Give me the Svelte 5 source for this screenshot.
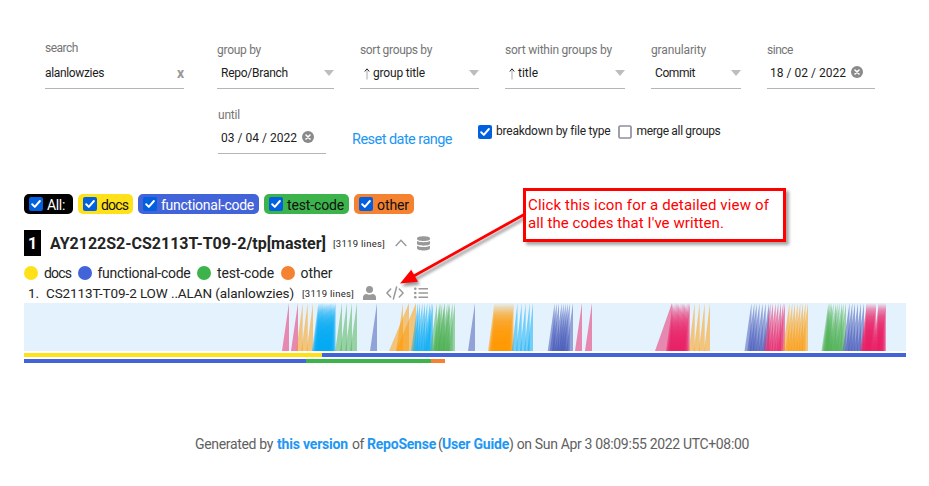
<script>
  function fit(node, width) {
    const natural = node.getBoundingClientRect().width;
    node.style.letterSpacing = `${(width - natural) / node.textContent.length}px`;
  }

  const selects = [
    { label: 'group by', lw: 44, value: 'Repo/Branch', vw: 67, cls: 'group' },
    { label: 'sort groups by', lw: 72, value: 'group title', vw: 52, cls: 'sort', arrow: true },
    { label: 'sort within groups by', lw: 107, value: 'title', vw: 20, cls: 'within', arrow: true },
    { label: 'granularity', lw: 55, value: 'Commit', vw: 40, cls: 'gran' }
  ];

  const tags = [
    { name: 'All:', w: 18, cls: 'all' },
    { name: 'docs', w: 27, cls: 'docs' },
    { name: 'functional-code', w: 93, cls: 'func' },
    { name: 'test-code', w: 57, cls: 'test' },
    { name: 'other', w: 32, cls: 'other' }
  ];

  const pink = '#e91e63';
  const orange = '#ff9800';
  const blue = '#03a9f4';
  const green = '#4caf50';
  const indigo = '#3f51b5';

  const range = (from, to, step) => {
    const out = [];
    for (let v = from; v <= to + 0.01; v += step) out.push(v);
    return out;
  };
  const group = (color, peaks, w = 7) => peaks.map((x) => ({ color, x, w }));

  const ramps = [
    ...group(pink, [265, 274]),
    ...group(orange, [278.7, 283.7, 289], 6.5),
    ...group(blue, range(294.5, 312, 0.9), 6.5),
    ...group(green, [318, 323, 328, 333], 6.8),
    ...group(indigo, [353]),
    ...group(orange, [379]),
    ...group(orange, [385, 392], 20),
    ...group(blue, [394, 396, 398.5, 401, 403.3, 406, 407.5, 409]),
    ...group(green, range(413, 431, 2.6)),
    ...group(green, [416.5, 420.5, 425, 431]),
    ...group(indigo, [451]),
    ...group(orange, range(470.5, 490, 1), 6.5),
    ...group(blue, [493.5, 497.7, 501.7, 505.7, 509], 5.7),
    ...group(indigo, [530.7, 532.7, 535, 537.7, 539.7, 541.7, 543.7, 545.7, 549]),
    ...group(pink, [558, 568]),
    ...group(pink, [648], 17),
    ...group(pink, range(649, 666, 1.2)),
    ...group(orange, [670.7, 675.7, 680.7, 686], 6),
    ...group(indigo, [727.5, 730.3, 732.7, 735.5, 738.7, 741.7, 745]),
    ...group(pink, [746.5, 749, 751.7, 754.3, 757, 759.3, 761]),
    ...group(orange, [765.5, 768.3, 771, 773.7, 776.3, 779, 781.5, 784]),
    ...group(green, [804.5, 805.5, 806.7, 808, 809.5, 812, 813.5, 815.5, 818, 819.5, 822]),
    ...group(indigo, [825.5, 828.3, 831, 834, 837, 840]),
    ...group(pink, [...range(843, 852.5, 1), ...range(855, 862, 1)])
  ];

  const credits = [
    { text: 'Generated by', w: 78, gap: 4 },
    { text: 'this version', w: 71, gap: 4, href: '#version' },
    { text: 'of', w: 12, gap: 3 },
    { text: 'RepoSense', w: 69, gap: 2, href: '#reposense' },
    { text: '(', w: 4, gap: 0 },
    { text: 'User Guide', w: 67, gap: 0, href: '#guide' },
    { text: ') on Sun Apr 3 08:09:55 2022 UTC+08:00', w: 240, gap: 0 }
  ];
</script>

{#snippet box(on)}
  <svg class="check" viewBox="0 0 14 14">
    {#if on}
      <rect width="14" height="14" rx="2" fill="#0060df" />
      <path d="M3.2 7.3 5.8 9.9 10.9 4" fill="none" stroke="#fff" stroke-width="2" stroke-linecap="round" stroke-linejoin="round" />
    {:else}
      <rect x="1" y="1" width="12" height="12" rx="1.3" fill="#fff" stroke="#8f8f9d" stroke-width="1.7" />
    {/if}
  </svg>
{/snippet}

{#snippet clear()}
  <svg class="clear" viewBox="0 0 12 12">
    <circle cx="6" cy="6" r="6" fill="#8a8a8a" />
    <path d="M4 4 8 8M8 4 4 8" stroke="#fff" stroke-width="1.6" stroke-linecap="round" />
  </svg>
{/snippet}

<main>
  <section class="filters">
    <div class="field search">
      <div class="label"><span use:fit={33}>search</span></div>
      <div class="value"><span use:fit={59}>alanlowzies</span><b class="x">x</b></div>
    </div>
    {#each selects as s}
      <div class="field {s.cls}">
        <div class="label"><span use:fit={s.lw}>{s.label}</span></div>
        <div class="value">
          {#if s.arrow}
            <svg class="up" viewBox="0 0 6 12"><path d="M3 2.5V11.5" stroke="#aaa" stroke-width="1" /><path d="M.8 3.5 3 .8 5.2 3.5" fill="none" stroke="#222" stroke-width="1" /></svg>
          {/if}
          <span use:fit={s.vw}>{s.value}</span>
          <i class="caret"></i>
        </div>
      </div>
    {/each}
    <div class="field since">
      <div class="label"><span use:fit={26}>since</span></div>
      <div class="value"><span use:fit={76}>18 / 02 / 2022</span>{@render clear()}</div>
    </div>
  </section>

  <section class="second">
    <div class="field until">
      <div class="label"><span use:fit={22}>until</span></div>
      <div class="value"><span use:fit={76}>03 / 04 / 2022</span>{@render clear()}</div>
    </div>
    <a class="reset" href="#reset"><span use:fit={100}>Reset date range</span></a>
    <div class="option first">{@render box(true)}<span use:fit={114}>breakdown by file type</span></div>
    <div class="option">{@render box(false)}<span use:fit={84}>merge all groups</span></div>
  </section>

  <section class="tags">
    {#each tags as t}
      <div class="tag {t.cls}">{@render box(true)}<span use:fit={t.w}>{t.name}</span></div>
    {/each}
  </section>

  <section class="title">
    <b class="rank">1</b>
    <h1><span use:fit={276}>AY2122S2-CS2113T-T09-2/tp[master]</span></h1>
    <small><span use:fit={52}>[3119 lines]</span></small>
    <svg class="chevron" viewBox="0 0 12 8"><path d="M.7 7 6 1.2 11.3 7" fill="none" stroke="#999" stroke-width="1.4" /></svg>
    <svg class="db" viewBox="0 0 13 15" fill="#999">
      <path d="M0 2.3C0 -.5 13 -.5 13 2.3V3.1C13 5.7 0 5.7 0 3.1Z" />
      <path d="M0 5.1C2.7 6.7 10.3 6.7 13 5.1V7.8C13 10.3 0 10.3 0 7.8Z" />
      <path d="M0 9.8C2.7 11.4 10.3 11.4 13 9.8V12.3C13 15.3 0 15.3 0 12.3Z" />
    </svg>
  </section>

  <section class="legend">
    {#each tags.slice(1) as t}
      <i class="dot {t.cls}"></i><span use:fit={t.w}>{t.name}</span>
    {/each}
  </section>

  <section class="author">
    <span class="num">1.</span>
    <span class="name" use:fit={248}>CS2113T-T09-2 LOW ..ALAN (alanlowzies)</span>
    <small><span use:fit={52}>[3119 lines]</span></small>
    <svg class="user" viewBox="0 0 13 14" fill="#999"><circle cx="6.5" cy="3.5" r="3.5" /><path d="M0 14V11.5C0 9.2 1.5 8 3.5 8Q6.5 9.4 9.5 8C11.5 8 13 9.2 13 11.5V14Z" /></svg>
    <svg class="code" viewBox="0 0 18 14" fill="none" stroke="#999" stroke-width="1.5" stroke-linecap="round" stroke-linejoin="round"><path d="M4.7 3 .9 7 4.7 11M13.3 3 17.1 7 13.3 11M10.6 1 7.4 13" /></svg>
    <svg class="list" viewBox="0 0 14 12"><path d="M4.5 1.7H14M4.5 6H14M4.5 10.3H14" stroke="#999" stroke-width="1.5" /><g fill="#999"><circle cx="1.3" cy="1.7" r="1.3" /><circle cx="1.3" cy="6" r="1.3" /><circle cx="1.3" cy="10.3" r="1.3" /></g></svg>
  </section>

  <section class="chart">
    <svg class="ramps" viewBox="0 0 882 48">
      {#each ramps as r}
        <polygon points="{r.x - r.w},48 {r.x},0 {r.x},48" fill={r.color} fill-opacity="0.5" />
      {/each}
    </svg>
    <div class="bar"><i class="docs"></i><i class="func grow"></i></div>
    <div class="bar two"><i class="func"></i><i class="test"></i><i class="other"></i></div>
  </section>

  <footer>
    {#each credits as c}
      {#if c.href}
        <a href={c.href} style:margin-right="{c.gap}px"><span use:fit={c.w}>{c.text}</span></a>
      {:else}
        <span use:fit={c.w} style:margin-right="{c.gap}px">{c.text}</span>
      {/if}
    {/each}
  </footer>

  <svg class="pointer" viewBox="0 0 140 110">
    <path d="M135 24 22 87" stroke="#f00" stroke-width="2.7" />
    <path d="M10 93.4 21.2 79.8 28 91.8Z" fill="#f00" />
  </svg>
  <aside>
    <span use:fit={241}>Click this icon for a detailed view of</span>
    <span use:fit={196}>all the codes that I've written.</span>
  </aside>
</main>

<style>
  :global(body) { background: #fff; overflow: hidden; }
  main {
    position: relative;
    width: 929px;
    height: 486px;
    background: #fff;
    color: #242424;
    font: 12px/16px Roboto, "Open Sans", sans-serif;
  }
  span { white-space: pre; flex: none; }
  svg { display: block; flex: none; overflow: visible; }
  a { color: #2196f3; text-decoration: none; }

  .filters { display: flex; padding-left: 45px; height: 89px; }
  .field { box-sizing: border-box; height: 47px; border-bottom: 1px solid #b5b5b5; }
  .filters .field { margin-top: 42px; }
  .label { display: flex; height: 16px; color: #757575; }
  .value { display: flex; align-items: center; height: 16px; margin-top: 7px; padding-left: 3px; color: #1c1c1c; }
  .filters .search { width: 139px; margin-right: 33px; margin-top: 40px; height: 49px; }
  .search .value { padding-left: 0; margin-top: 9px; }
  .x { margin-left: auto; color: #999; font-size: 14px; font-weight: 700; }
  .group { width: 117px; margin-right: 26px; }
  .sort { width: 119px; margin-right: 26px; }
  .within { width: 120px; margin-right: 26px; }
  .gran { width: 90px; margin-right: 26px; }
  .gran .value, .group .value { padding-left: 4px; }
  .since, .until { width: 108px; }
  .up { width: 6px; height: 12px; margin: 2px 3px 0 1px; }
  .caret { width: 0; height: 0; margin-left: auto; border: 5px solid transparent; border-top: 6px solid #bdbdbd; border-bottom: 0; }
  .clear { width: 12px; height: 12px; margin: -2px 0 0 5px; }

  .second { display: flex; padding: 18px 0 0 218px; height: 87px; box-sizing: border-box; }
  .reset { display: flex; margin: 24px 0 0 26px; font-size: 14.5px; line-height: 18px; height: 18px; }
  .option { display: flex; align-items: center; height: 16px; gap: 4px; margin-top: 17px; margin-left: 8px; }
  .option.first { margin-left: 26px; }
  .option span { margin-top: -2px; }
  .check { width: 14px; height: 14px; }

  .tags { display: flex; gap: 5px; margin-top: 18px; padding-left: 24px; font-size: 14px; }
  .tag { display: flex; align-items: center; gap: 4px; box-sizing: border-box; height: 20px; padding: 0 5px; border-radius: 5px; }
  .tag span { padding-top: 2px; }
  .tag.docs, .tag.test, .tag.other { color: #111; }
  .tag.all { width: 49px; }
  .tag.docs { width: 55px; }
  .tag.func { width: 121px; }
  .tag.test { width: 85px; }
  .tag.other { width: 60px; }
  .all { background: #000; color: #fff; }
  .docs { background: #ffe119; }
  .func { background: #4363d8; }
  .tag.func { color: #fff; }
  .test { background: #3cb44b; }
  .other { background: #f58231; }

  .title { display: flex; align-items: center; height: 26px; margin-top: 16px; padding-left: 24px; }
  .rank { width: 17px; height: 26px; background: #000; color: #fff; font-size: 16px; line-height: 27px; text-align: center; margin-right: 9px; }
  h1 { display: flex; margin: 1px 7px 0 0; font-size: 16px; line-height: 20px; font-weight: 700; }
  small { display: flex; font-size: 9.5px; line-height: 16px; }
  .title small { margin-top: 2px; }
  .chevron { width: 12px; height: 8px; margin-left: 10px; }
  .db { width: 13px; height: 15px; margin-left: 10px; }

  .legend { display: flex; align-items: center; height: 16px; margin-top: 9px; padding-left: 24px; font-size: 14px; }
  .dot { width: 14px; height: 14px; margin-right: 6px; border-radius: 50%; }
  .legend span { margin-right: 6.5px; }

  .author { display: flex; align-items: center; height: 18px; margin-top: 3px; padding-left: 28px; font-size: 13.5px; }
  .num { width: 18px; }
  .author small { margin: 2px 0 0 8px; }
  .user { width: 13px; height: 14px; margin-left: 9px; }
  .code { width: 18px; height: 14px; margin-left: 10px; }
  .list { width: 14px; height: 12px; margin-left: 10px; }

  .chart { display: flex; flex-direction: column; width: 882px; margin: 1px 0 0 24px; }
  .ramps { width: 882px; height: 48px; background: #e3f2fd; margin-bottom: 2px; }
  .bar { display: flex; height: 4px; margin-bottom: 2px; }
  .bar .docs { width: 298px; }
  .bar .grow { flex: 1; }
  .two .func { width: 282px; }
  .two .test { width: 125px; }
  .two .other { width: 14px; }

  footer { display: flex; margin: 70px 0 0 195px; color: #616161; font-size: 14px; line-height: 18px; }
  footer a { display: flex; flex: none; font-weight: 700; }

  .pointer { position: absolute; left: 390px; top: 190px; width: 140px; height: 110px; filter: drop-shadow(2px 3px 1.5px rgba(0, 0, 0, 0.4)); }
  aside {
    position: absolute;
    left: 523px;
    top: 188px;
    box-sizing: border-box;
    width: 263px;
    height: 54px;
    display: flex;
    flex-direction: column;
    align-items: flex-start;
    padding: 5px 0 0 2px;
    border: 3px solid #f00;
    background: #fff;
    color: #f00;
    font-size: 15px;
    line-height: 18px;
    box-shadow: 3px 3px 3px rgba(0, 0, 0, 0.35);
  }
</style>
